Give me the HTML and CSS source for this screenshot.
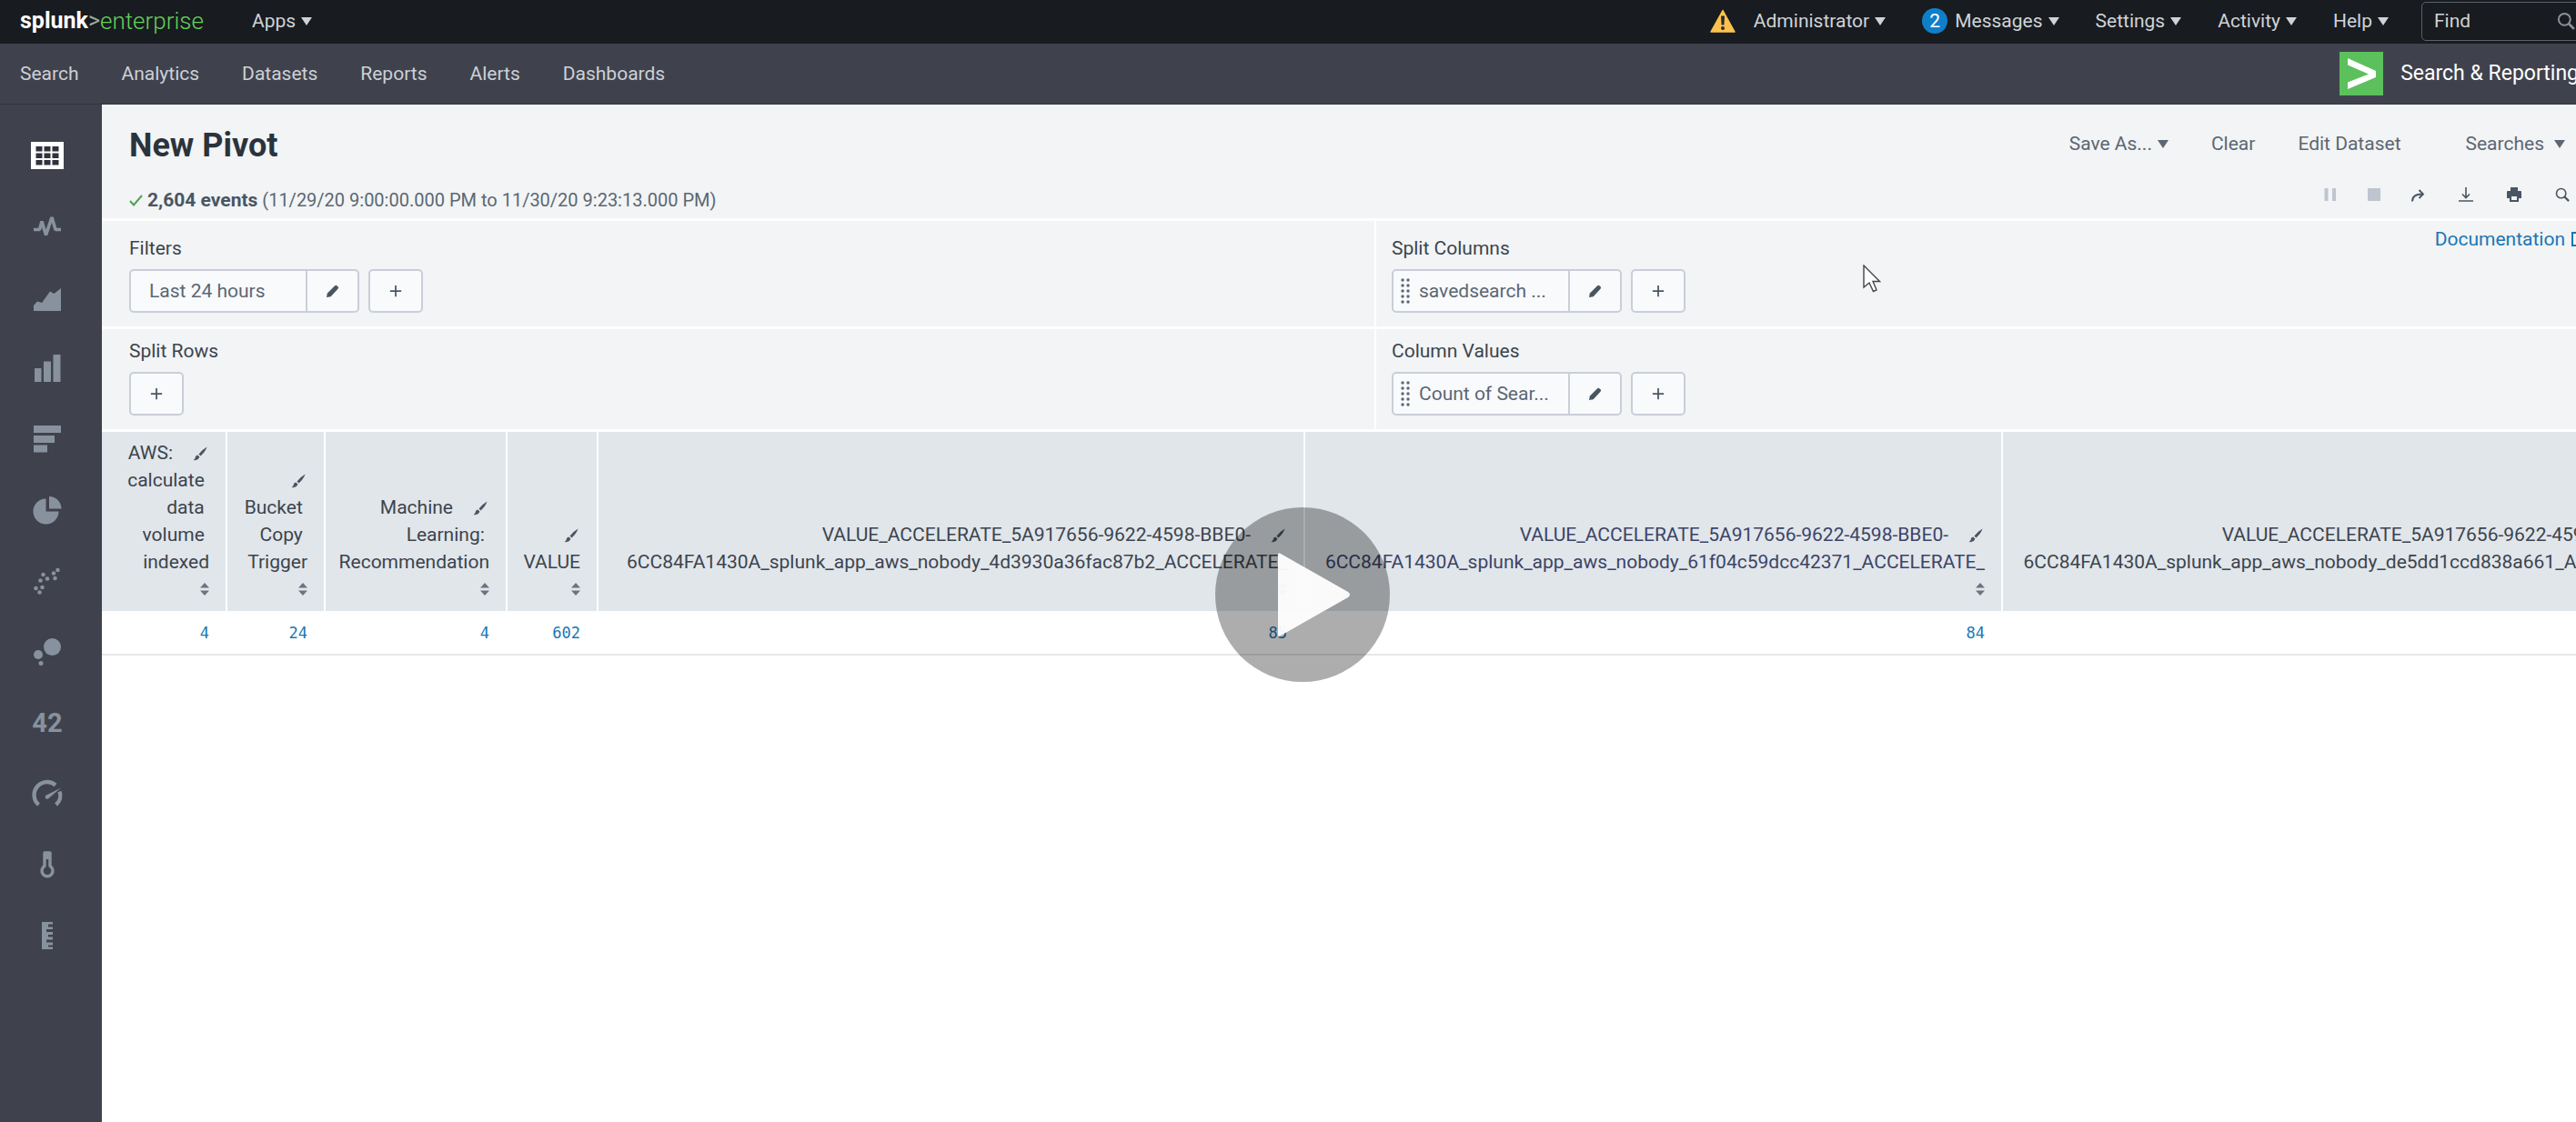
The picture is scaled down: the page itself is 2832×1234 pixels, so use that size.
FILE: index.html
```html
<!DOCTYPE html>
<html lang="en">
<head>
<meta charset="utf-8">
<title>New Pivot | Splunk Enterprise</title>
<link rel="stylesheet" href="styles.css">
</head>
<body>
<svg class="defs" aria-hidden="true">
  <symbol id="pencil" viewBox="0 0 16 16"><path d="M1 15l1-5 8.500-8.500q1.500-1.200 3 0l.9.9q1.100 1.400 0 2.700L6 14z" fill="currentColor"/></symbol>
  <symbol id="brush" viewBox="0 0 16 16"><path d="M15.500.5Q11 3 6.500 8.500l2 2Q14 5.500 15.500.5zM5.300 9.600q-2.300.3-2.600 2.700-.4 2-2.200 2.700 5.500.8 6.900-3.400z" fill="currentColor"/></symbol>
  <symbol id="plus" viewBox="0 0 16 16"><path d="M8 1v14M1 8h14" stroke="currentColor" stroke-width="2"/></symbol>
  <symbol id="grip" viewBox="0 0 10 28"><g fill="currentColor"><circle cx="2" cy="2" r="1.700"/><circle cx="8" cy="2" r="1.700"/><circle cx="2" cy="8" r="1.700"/><circle cx="8" cy="8" r="1.700"/><circle cx="2" cy="14" r="1.700"/><circle cx="8" cy="14" r="1.700"/><circle cx="2" cy="20" r="1.700"/><circle cx="8" cy="20" r="1.700"/><circle cx="2" cy="26" r="1.700"/><circle cx="8" cy="26" r="1.700"/></g></symbol>
  <symbol id="lens" viewBox="0 0 18 18"><circle cx="7.500" cy="7.500" r="5.800" fill="none" stroke="currentColor" stroke-width="1.800"/><path d="M11.500 11.500L17 17" stroke="currentColor" stroke-width="2.500"/></symbol>
  <symbol id="sort" viewBox="0 0 10 14"><path d="M5 0l5 5.500H0zM5 14l5-5.500H0z" fill="currentColor"/></symbol>
</svg>

<header class="topbar">
  <a class="logo" href="#"><b>splunk</b><span>&gt;</span><i>enterprise</i></a>
  <button class="menu apps">Apps<span class="caret"></span></button>
  <div class="topbar-right">
    <svg class="warn" viewBox="0 0 28 26" aria-label="Warning"><path d="M14 1.500L27 25H1z" fill="#fdc24e" stroke="#fdc24e" stroke-width="1.500" stroke-linejoin="round"/><path d="M12 7.500h4l-.6 10h-2.800z" fill="#2b2b2b"/><circle cx="14" cy="21" r="2" fill="#2b2b2b"/></svg>
    <button class="menu admin">Administrator<span class="caret"></span></button>
    <button class="menu"><span class="badge">2</span>Messages<span class="caret"></span></button>
    <button class="menu">Settings<span class="caret"></span></button>
    <button class="menu">Activity<span class="caret"></span></button>
    <button class="menu">Help<span class="caret"></span></button>
    <div class="find"><input type="text" placeholder="Find" aria-label="Find"><svg><use href="#lens"/></svg></div>
  </div>
</header>

<nav class="appnav">
  <a href="#">Search</a><a href="#">Analytics</a><a href="#">Datasets</a><a href="#">Reports</a><a href="#">Alerts</a><a href="#">Dashboards</a>
  <a class="app" href="#"><svg viewBox="0 0 48 48" aria-hidden="true"><path fill="#5cc05c" d="M0 0h48v48H0z"/><path fill="#fff" d="M9 7l31 14v7L9 41v-7.500L32 24.500 9 14.500z"/></svg>Search &amp; Reporting</a>
</nav>

<div class="body">
  <aside class="rail" aria-label="Visualization type">
    <a class="on" href="#" aria-label="Statistics table"><svg class="grid" viewBox="0 0 36 30"><path d="M0 0h36v30H0z" fill="#fff"/><path d="M5.500 5h7v5.500h-7zM14.500 5h7v5.500h-7zM23.500 5h7v5.500h-7zM5.500 12.500h7V18h-7zM14.500 12.500h7V18h-7zM23.500 12.500h7V18h-7zM5.500 20h7v5.500h-7zM14.500 20h7v5.500h-7zM23.500 20h7v5.500h-7z" fill="#2f323c"/></svg></a>
    <a href="#" aria-label="Line chart"><svg viewBox="0 0 30 30"><path d="M0 18.500h6.500L9 9.500l4.500 15L20 5l4 13.500h6" fill="none" stroke="currentColor" stroke-width="3.600" stroke-linejoin="bevel"/></svg></a>
    <a href="#" aria-label="Area chart"><svg viewBox="0 0 30 30"><path d="M0 30v-6l4-4.500 5 1.500L18 8.500l4.500 2.500L30 5v25z" fill="currentColor"/></svg></a>
    <a href="#" aria-label="Column chart"><svg viewBox="0 0 30 30"><path d="M1 15h7.500v15H1zM11 7.500h8V30h-8zM21.500 0h8v30h-8z" fill="currentColor"/></svg></a>
    <a href="#" aria-label="Bar chart"><svg viewBox="0 0 30 30"><path d="M0 0h30v8H0zM0 11h23v8H0zM0 21.500h15v8H0z" fill="currentColor"/></svg></a>
    <a href="#" aria-label="Pie chart"><svg viewBox="0 0 30 30"><path d="M13.500 2.500a14 14 0 1 0 14 14h-14zM17 0a13.500 13.500 0 0 1 13.500 13.500H17z" fill="currentColor"/></svg></a>
    <a href="#" aria-label="Scatter chart"><svg viewBox="0 0 30 30"><g fill="currentColor"><circle cx="2.500" cy="23" r="2.300"/><circle cx="6.500" cy="27.500" r="2.300"/><circle cx="9.500" cy="22" r="2.300"/><circle cx="7.500" cy="14.500" r="2.300"/><circle cx="10.500" cy="8" r="2.300"/><circle cx="15" cy="12.500" r="2.300"/><circle cx="22" cy="6.500" r="2.300"/><circle cx="23.500" cy="12" r="2.300"/><circle cx="26.500" cy="3" r="2.300"/></g></svg></a>
    <a href="#" aria-label="Bubble chart"><svg viewBox="0 0 30 30"><g fill="currentColor"><circle cx="20.500" cy="9.500" r="9.500"/><circle cx="5" cy="18" r="5"/><circle cx="8" cy="27.500" r="2.500"/></g></svg></a>
    <a class="num" href="#" aria-label="Single value">42</a>
    <a href="#" aria-label="Radial gauge"><svg viewBox="0 0 30 30"><path d="M5.500 27A13.200 13.200 0 0 1 24 5.500M28.500 12.500a13 13 0 0 1-4 14.500" fill="none" stroke="currentColor" stroke-width="4.400"/><path d="M13 17L30 8.500 16 20.500q-4 1-3-3.500z" fill="currentColor"/></svg></a>
    <a href="#" aria-label="Filler gauge"><svg viewBox="0 0 30 30"><path d="M12 2h6v14.500a6 6 0 1 1-6 0z" fill="none" stroke="currentColor" stroke-width="3.400" stroke-linejoin="round"/><path d="M11 1h8v8h-8z" fill="currentColor"/></svg></a>
    <a href="#" aria-label="Marker gauge"><svg viewBox="0 0 30 30"><path d="M9 0h12v2.500h-5v3h5V8h-7v3h7v3h-5v2.500h5v3h-7v3h7v3h-5v2h5V30H9z" fill="currentColor"/></svg></a>
  </aside>

  <main class="main">
    <section class="head">
      <div class="head-row">
        <h1>New Pivot</h1>
        <div class="actions">
          <button class="flat save">Save As...<span class="caret"></span></button>
          <button class="flat clear">Clear</button>
          <button class="flat edit">Edit Dataset</button>
          <button class="flat searches">Searches<span class="caret wide"></span></button>
        </div>
      </div>
      <div class="head-row status">
        <p><svg class="check" viewBox="0 0 15 13" aria-hidden="true"><path d="M1 7l4 4.500L14 1" fill="none" stroke="#53a051" stroke-width="2"/></svg><strong>2,604 events</strong> (11/29/20 9:00:00.000 PM to 11/30/20 9:23:13.000 PM)</p>
        <div class="job">
          <button class="off" disabled aria-label="Pause"><svg viewBox="0 0 16 16"><path d="M3.500 1v14M12 1v14" stroke="currentColor" stroke-width="4"/></svg></button>
          <button class="off" disabled aria-label="Stop"><svg viewBox="0 0 16 16"><path d="M1 1h14v14H1z" fill="currentColor"/></svg></button>
          <button aria-label="Share"><svg viewBox="0 0 16 16"><path d="M2 15.500Q2 7.500 13 7.500M9.500 3l4.500 4.500L9.500 12" fill="none" stroke="currentColor" stroke-width="1.800"/></svg></button>
          <button aria-label="Export"><svg viewBox="0 0 16 16"><path d="M8 0v11M4 7.500l4 4 4-4M0 15h16" fill="none" stroke="currentColor" stroke-width="1.600"/></svg></button>
          <button aria-label="Print"><svg viewBox="0 0 16 16"><path d="M4 0h8v4h3q1 0 1 1v7h-3v4H3v-4H0V5q0-1 1-1h3z" fill="currentColor"/><path d="M5 10h6v4H5z" fill="#f2f4f5"/></svg></button>
          <button aria-label="Inspect"><svg><use href="#lens"/></svg></button>
        </div>
      </div>
    </section>

    <section class="config">
      <div class="cell">
        <h2>Filters</h2>
        <div class="controls">
          <div class="pill"><button class="name plain">Last 24 hours</button><button class="edit-btn" aria-label="Edit filter"><svg><use href="#pencil"/></svg></button></div>
          <button class="add" aria-label="Add filter"><svg><use href="#plus"/></svg></button>
        </div>
      </div>
      <div class="cell right">
        <h2>Split Columns</h2>
        <a class="doc" href="#">Documentation <svg viewBox="0 0 18 18" aria-hidden="true"><path d="M8 2H2v14h14v-6M10 2h6v6M16 2L8 10" fill="none" stroke="currentColor" stroke-width="2"/></svg></a>
        <div class="controls">
          <div class="pill"><button class="name"><svg class="grip"><use href="#grip"/></svg>savedsearch ...</button><button class="edit-btn" aria-label="Edit split column"><svg><use href="#pencil"/></svg></button></div>
          <button class="add" aria-label="Add split column"><svg><use href="#plus"/></svg></button>
        </div>
      </div>
      <div class="cell lower">
        <h2>Split Rows</h2>
        <div class="controls">
          <button class="add" aria-label="Add split row"><svg><use href="#plus"/></svg></button>
        </div>
      </div>
      <div class="cell lower right">
        <h2>Column Values</h2>
        <div class="controls">
          <div class="pill"><button class="name"><svg class="grip"><use href="#grip"/></svg>Count of Sear...</button><button class="edit-btn" aria-label="Edit column value"><svg><use href="#pencil"/></svg></button></div>
          <button class="add" aria-label="Add column value"><svg><use href="#plus"/></svg></button>
        </div>
      </div>
    </section>

    <table class="results">
      <colgroup><col class="c1"><col class="c2"><col class="c3"><col class="c4"><col class="c5"><col class="c6"><col class="c7"></colgroup>
      <thead>
        <tr>
          <th>AWS:<svg class="brush"><use href="#brush"/></svg>
calculate&nbsp;
data&nbsp;
volume&nbsp;
indexed
<svg class="sort"><use href="#sort"/></svg></th>
          <th><svg class="brush"><use href="#brush"/></svg>
Bucket&nbsp;
Copy&nbsp;
Trigger
<svg class="sort"><use href="#sort"/></svg></th>
          <th>Machine<svg class="brush"><use href="#brush"/></svg>
Learning:&nbsp;
Recommendation
<svg class="sort"><use href="#sort"/></svg></th>
          <th><svg class="brush"><use href="#brush"/></svg>
VALUE
<svg class="sort"><use href="#sort"/></svg></th>
          <th>VALUE_ACCELERATE_5A917656-9622-4598-BBE0-<svg class="brush"><use href="#brush"/></svg>
6CC84FA1430A_splunk_app_aws_nobody_4d3930a36fac87b2_ACCELERATE_
<svg class="sort"><use href="#sort"/></svg></th>
          <th class="hover">VALUE_ACCELERATE_5A917656-9622-4598-BBE0-<svg class="brush"><use href="#brush"/></svg>
6CC84FA1430A_splunk_app_aws_nobody_61f04c59dcc42371_ACCELERATE_
<svg class="sort"><use href="#sort"/></svg></th>
          <th>VALUE_ACCELERATE_5A917656-9622-4598-BBE0-<svg class="brush"><use href="#brush"/></svg>
6CC84FA1430A_splunk_app_aws_nobody_de5dd1ccd838a661_ACCELERATE_
<svg class="sort"><use href="#sort"/></svg></th>
        </tr>
      </thead>
      <tbody>
        <tr><td>4</td><td>24</td><td>4</td><td>602</td><td>85</td><td>84</td><td></td></tr>
      </tbody>
    </table>
  </main>
</div>

<button class="play" aria-label="Play video"><svg viewBox="0 0 192 192"><circle cx="96" cy="96" r="96" fill="#000" fill-opacity=".32"/><path d="M69 52q0-3 3-1l74 42q4 3 0 6l-74 42q-3 2-3-1z" fill="#fff" fill-opacity=".95"/></svg></button>
<svg class="cursor" viewBox="0 0 20 31" aria-hidden="true"><path d="M1 1v24l6-5 4.500 9.500 3.500-1.700-4-9.300h7.500z" fill="#fff" stroke="#444" stroke-width="1.400"/></svg>
</body>
</html>
```
FILE: styles.css
```css
* { box-sizing: border-box; }
body {
  margin: 0;
  min-height: 100vh;
  display: flex;
  flex-direction: column;
  position: relative;
  overflow-x: hidden;
  background: #fff;
  color: #3c444d;
  font: 21px/30px Roboto, "Liberation Sans", sans-serif;
}
a { color: inherit; text-decoration: none; }
button { margin: 0; padding: 0; border: 0; background: none; color: inherit; font: inherit; white-space: nowrap; }
h1, h2, p { margin: 0; }
svg { display: block; flex: none; }
.defs { position: absolute; width: 0; height: 0; }

.topbar {
  display: flex;
  align-items: center;
  height: 48px;
  padding: 0 0 2px 22px;
  background: #181b1f;
  color: #cfd3d8;
  overflow: hidden;
}
.logo { display: flex; width: 255px; font-size: 25px; color: #65d05c; }
.logo b { color: #fff; font-weight: 700; }
.logo i { font-size: 26px; font-style: normal; font-weight: 300; }
.logo span { font-weight: 400; color: #9aa89a; }
.menu { display: flex; align-items: center; }
.caret {
  margin-left: 6px;
  border: 6px solid transparent;
  border-top: 9px solid currentColor;
  border-bottom: 0;
}
.caret.wide { margin-left: 11px; }
.topbar-right { display: flex; align-items: center; gap: 40px; margin-left: auto; }
.warn { width: 28px; height: 26px; margin-right: -20px; }
.badge {
  width: 28px;
  height: 28px;
  margin-right: 8px;
  border-radius: 50%;
  background: #0f7fca;
  color: #fff;
  line-height: 28px;
  text-align: center;
}
.find {
  display: flex;
  align-items: center;
  width: 190px;
  height: 43px;
  margin: 0 -20px 0 -4px;
  padding: 0 20px 0 13px;
  border: 1px solid #5c6068;
  border-radius: 5px;
}
.find input { width: 135px; flex: none; padding: 0; border: 0; background: none; font: inherit; color: inherit; }
.find input::placeholder { color: #cfd3d8; opacity: 1; }
.find svg { width: 20px; height: 20px; color: #8b9097; }

.appnav {
  display: flex;
  align-items: center;
  gap: 47px;
  height: 67px;
  padding-left: 22px;
  background: #3f424d;
  border-bottom: 1px solid #33353e;
  color: #ccd0d6;
  overflow: hidden;
}
.app { display: flex; align-items: center; gap: 19px; margin: 0 -3px 0 auto; font-size: 23px; color: #fff; white-space: nowrap; }
.app svg { width: 48px; height: 48px; }

.body { display: flex; flex: 1; }
.rail { flex: none; width: 112px; padding-top: 17px; background: #3f424d; color: #88929e; }
.rail a { display: flex; align-items: center; justify-content: center; height: 78px; padding-right: 8px; }
.rail svg { width: 30px; height: 30px; overflow: visible; }
.rail .grid { width: 36px; }
.rail .num { font-size: 29px; font-weight: 700; }

.main { flex: 1; min-width: 0; overflow: hidden; }
.head { height: 128px; padding: 24px 0 0 30px; background: #f2f4f5; border-bottom: 3px solid #fff; }
.head-row { display: flex; align-items: center; justify-content: space-between; height: 42px; }
h1 { font-size: 36px; font-weight: 700; line-height: 42px; color: #2b333c; }
.actions { display: flex; color: #5c6773; padding: 0 12px 4px 0; }
.flat { display: flex; align-items: center; }
.save, .clear { margin-right: 47px; }
.edit { margin-right: 71px; }
.status { height: 78px; padding-right: 7px; }
.status p { display: flex; gap: 5px; align-items: center; color: #5c6773; font-size: 20px; white-space: nowrap; }
.status strong { font-size: 21px; font-weight: 700; color: #4a5563; }
.check { width: 15px; height: 13px; }
.job { display: flex; gap: 37px; color: #4a5563; padding-bottom: 12px; }
.job svg { width: 16px; height: 16px; }
.job .off { margin-right: -5px; color: #bfc5cf; }

.config { display: grid; grid-template-columns: 1399px 1fr; background: #f2f4f5; }
.cell { position: relative; height: 119px; padding: 15px 0 0 30px; border-bottom: 3px solid #fff; }
.cell.lower { height: 113px; padding-top: 9px; }
.cell.right { padding-left: 17px; border-left: 2px solid #fff; }
h2 { font-size: 21px; font-weight: 400; line-height: 30px; margin-bottom: 8px; }
.controls { display: flex; gap: 10px; }
.pill, .add { height: 48px; border: 2px solid #c9ced8; border-radius: 5px; background: #f8fafc; color: #4a5563; }
.pill { display: flex; width: 253px; }
.name { display: flex; align-items: center; flex: 1; gap: 10px; padding-left: 8px; color: #5c6773; }
.name.plain { padding-left: 20px; }
.grip { width: 10px; height: 28px; }
.edit-btn { display: flex; align-items: center; justify-content: center; width: 57px; border-left: 2px solid #c9ced8; }
.edit-btn svg { width: 15px; height: 15px; }
.add { display: flex; align-items: center; justify-content: center; width: 60px; }
.add svg { width: 14px; height: 14px; }
.doc { position: absolute; top: 5px; right: -12px; display: flex; align-items: center; gap: 6px; color: #1a77b4; }
.doc svg { width: 18px; height: 18px; }

.results { width: 2862px; table-layout: fixed; border-collapse: separate; border-spacing: 0; }
.c1 { width: 138px; }
.c2 { width: 108px; }
.c3 { width: 200px; }
.c4 { width: 100px; }
.c5 { width: 777px; }
.c6 { width: 767px; }
th {
  padding: 8px 18px 9px 0;
  border-right: 2px solid #fff;
  background: #e1e6eb;
  font-weight: 400;
  line-height: 30px;
  text-align: right;
  vertical-align: bottom;
  white-space: pre;
}
th svg { display: inline-block; }
.brush { width: 16px; height: 16px; margin: 0 2px 0 22px; vertical-align: -2px; color: #4a5563; }
.sort { width: 10px; height: 14px; color: #6b7480; }
.hover { color: #3c4466; }
td {
  height: 49px;
  padding: 0 20px 0 0;
  border-bottom: 2px solid #e6e8ea;
  color: #1a77b4;
  font: 17px/30px "DejaVu Sans Mono", monospace;
  text-align: right;
}

.play { position: absolute; left: 1336px; top: 558px; width: 192px; height: 192px; }
.play svg { width: 192px; height: 192px; }
.cursor { position: absolute; left: 2048px; top: 291px; width: 20px; height: 31px; }
```
